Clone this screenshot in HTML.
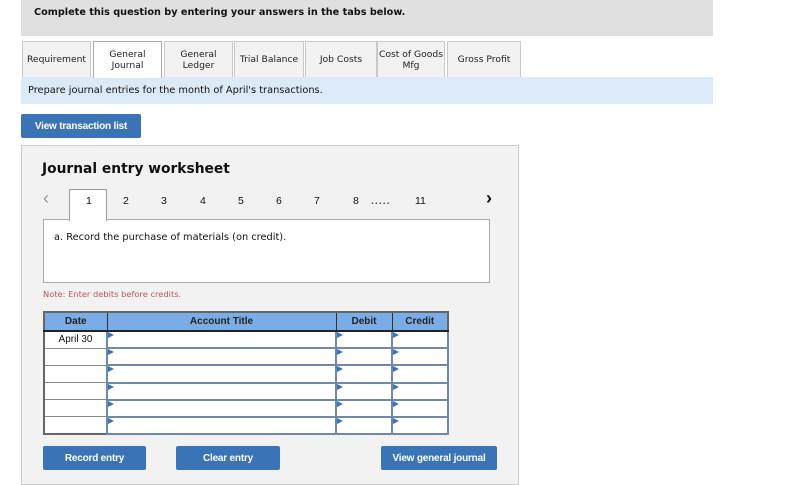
<!DOCTYPE html>
<html><head><style>
*{margin:0;padding:0;box-sizing:border-box}
body{width:792px;height:479px;background:#fff;font-family:"DejaVu Sans","Liberation Sans",sans-serif;position:relative;overflow:hidden;color:#111}
.a{position:absolute}
.hdr{left:21px;top:0;width:692px;height:36px;background:#e0e0e0;font-weight:bold;font-size:9.7px;padding:7px 0 0 13px}
.tab{top:41px;height:36px;background:#f2f2f2;border:1px solid #c9c9c9;border-bottom:none;font-size:9.2px;display:flex;align-items:center;justify-content:center;text-align:center;line-height:11px;color:#222}
.bar{left:21px;top:77px;width:692px;height:27px;background:#dbeaf7;font-size:9.8px;padding:8px 0 0 7px}
.btn{background:#3a74b7;color:#fff;font-family:"Liberation Sans",sans-serif;font-weight:bold;font-size:10px;display:flex;align-items:center;justify-content:center;border-radius:2px;letter-spacing:-0.2px}
.panel{left:21px;top:145px;width:498px;height:340px;background:#f2f2f2;border:1px solid #ccc}
.pn{top:195px;font-size:10.5px;font-family:"Liberation Sans",sans-serif}
td{border:1px solid #888;height:17.2px;padding:0;font-family:"Liberation Sans",sans-serif;font-size:10px;text-align:center;background:#fff}
table{border-collapse:collapse;position:absolute;left:43px;top:311px;width:406px;border:2px solid #666}
th{background:#7aade5;font-family:"Liberation Sans",sans-serif;font-size:10px;font-weight:bold;height:19px;border:1px solid #333;border-bottom:2px solid #222;color:#222}
td.i{border:2px solid #6f89ad;position:relative;background:#fff}
td.i:before{content:"";position:absolute;left:0;top:0;border-left:6px solid #3a74b7;border-top:3px solid transparent;border-bottom:3px solid transparent}
</style></head><body>
<div class="a hdr">Complete this question by entering your answers in the tabs below.</div>
<div class="a tab" style="left:22px;width:69px">Requirement</div>
<div class="a tab" style="left:93px;width:69px;background:#fff;border-color:#aaa;height:37px;z-index:2">General<br>Journal</div>
<div class="a tab" style="left:164px;width:69px">General<br>Ledger</div>
<div class="a tab" style="left:234px;width:70px">Trial Balance</div>
<div class="a tab" style="left:305px;width:72px">Job Costs</div>
<div class="a tab" style="left:377px;width:68px">Cost of Goods<br>Mfg</div>
<div class="a tab" style="left:447px;width:74px">Gross Profit</div>
<div class="a bar">Prepare journal entries for the month of April's transactions.</div>
<div class="a btn" style="left:21px;top:114px;width:120px;height:24px">View transaction list</div>
<div class="a panel"></div>
<div class="a" style="left:42px;top:161px;font-weight:bold;font-size:13.8px">Journal entry worksheet</div>
<div class="a" style="left:43px;top:188px;font-size:18px;color:#999;font-family:'Liberation Sans',sans-serif">&lsaquo;</div>
<div class="a" style="left:486px;top:188px;font-size:18px;color:#111;font-family:'Liberation Sans',sans-serif;font-weight:bold">&rsaquo;</div>
<div class="a" style="left:69px;top:189px;width:38px;height:32px;background:#fff;border:1px solid #999;border-bottom:none;z-index:2"></div>
<div class="a pn" style="left:86px;z-index:3">1</div>
<div class="a pn" style="left:123px">2</div>
<div class="a pn" style="left:161px">3</div>
<div class="a pn" style="left:200px">4</div>
<div class="a pn" style="left:238px">5</div>
<div class="a pn" style="left:276px">6</div>
<div class="a pn" style="left:314px">7</div>
<div class="a pn" style="left:353px">8</div>
<div class="a pn" style="left:371px;letter-spacing:1px;font-weight:bold;color:#555">.....</div>
<div class="a pn" style="left:415px">11</div>
<div class="a" style="left:43px;top:219px;width:447px;height:64px;background:#fff;border:1px solid #aaa;font-size:9.8px;padding:12px 0 0 10px">a. Record the purchase of materials (on credit).</div>
<div class="a" style="left:43px;top:289px;font-size:8.3px;color:#b05a5a">Note: Enter debits before credits.</div>
<table>
<tr><th style="width:63px">Date</th><th style="width:229px">Account Title</th><th style="width:56px">Debit</th><th>Credit</th></tr>
<tr><td>April 30</td><td class="i"></td><td class="i"></td><td class="i"></td></tr>
<tr><td></td><td class="i"></td><td class="i"></td><td class="i"></td></tr>
<tr><td></td><td class="i"></td><td class="i"></td><td class="i"></td></tr>
<tr><td></td><td class="i"></td><td class="i"></td><td class="i"></td></tr>
<tr><td></td><td class="i"></td><td class="i"></td><td class="i"></td></tr>
<tr><td></td><td class="i"></td><td class="i"></td><td class="i"></td></tr>
</table>
<div class="a btn" style="left:43px;top:446px;width:103px;height:24px">Record entry</div>
<div class="a btn" style="left:176px;top:446px;width:104px;height:24px">Clear entry</div>
<div class="a btn" style="left:381px;top:446px;width:116px;height:24px">View general journal</div>
</body></html>
